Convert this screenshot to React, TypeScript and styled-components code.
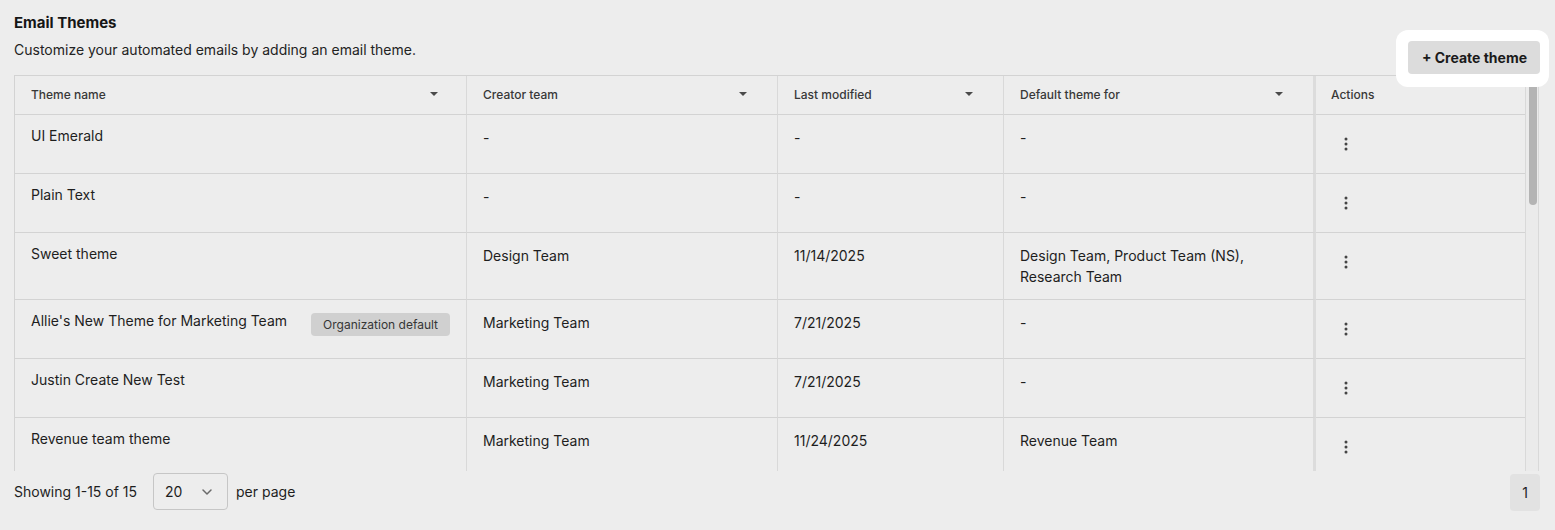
import React from "react";
import styled, { createGlobalStyle } from "styled-components";
import { ChevronDown } from "lucide-react";

const GlobalStyle = createGlobalStyle`
  html, body { margin: 0; padding: 0; background: #ededed; }
  body { font-family: Inter, "Noto Sans", "Liberation Sans", sans-serif; color: #1c1c1c; }
  * { box-sizing: border-box; }
`;

const Page = styled.div`
  position: relative;
  padding: 13px 16px 0 14px;
  height: 530px;
  overflow: hidden;
`;

const Title = styled.h1`
  margin: 0;
  font-size: 15px;
  line-height: 20px;
  font-weight: 700;
  color: #161616;
`;

const Subtitle = styled.p`
  margin: 7px 0 15px;
  font-size: 14px;
  line-height: 20px;
  color: #232323;
`;

const Spotlight = styled.div`
  position: absolute;
  top: 30px;
  right: 6px;
  padding: 11px 9px 13px 12px;
  background: #ffffff;
  border-radius: 12px;
  z-index: 2;
`;

const PrimaryButton = styled.button`
  display: block;
  height: 33px;
  padding: 0 13px 0 14px;
  border: none;
  border-radius: 4px;
  background: #dcdcdc;
  font-family: inherit;
  font-size: 14px;
  font-weight: 700;
  color: #1a1a1a;
  cursor: pointer;
`;

const TableFrame = styled.div`
  display: flex;
  height: 396px;
  border-top: 1px solid #d3d3d3;
`;

const Scroller = styled.div`
  flex: 1;
  min-width: 0;
  overflow-y: auto;
  border-left: 1px solid #d3d3d3;
  scrollbar-width: none;
  &::-webkit-scrollbar { display: none; }
`;

const ScrollTrack = styled.div`
  flex: none;
  width: 14px;
  padding: 2px 0 0 3px;
  background: #ebebeb;
  border-left: 1px solid #d9d9d9;
  border-right: 1px solid #d9d9d9;
`;

const ScrollThumb = styled.div`
  width: 8px;
  height: 127px;
  border-radius: 4px;
  background: #b4b4b4;
`;

const COLS = "452px 311px 226px 312px 1fr";

const HeaderRow = styled.div`
  display: grid;
  grid-template-columns: ${COLS};
  height: 39px;
`;

const HeaderCell = styled.div<{ $pinned?: boolean; $last?: boolean; $first?: boolean }>`
  display: flex;
  align-items: center;
  justify-content: space-between;
  padding: 0 ${(p) => (p.$first ? "28px" : "30px")} 2px
    ${(p) => (p.$last ? "15px" : "16px")};
  font-size: 12px;
  font-weight: 500;
  color: #383838;
  border-bottom: 1px solid #d3d3d3;
  border-right: ${(p) => (p.$last ? "none" : p.$pinned ? "3px solid #dcdcdc" : "1px solid #d9d9d9")};
`;

const Row = styled.div`
  display: grid;
  grid-template-columns: ${COLS};
`;

const Cell = styled.div<{ $pinned?: boolean; $first?: boolean }>`
  min-height: 59px;
  padding: ${(p) => (p.$first ? "10px 16px 12px 16px" : "12px 24px 12px 16px")};
  font-size: 14px;
  line-height: 21px;
  color: #1e1e1e;
  border-bottom: 1px solid #d3d3d3;
  border-right: ${(p) => (p.$pinned ? "3px solid #dcdcdc" : "1px solid #d9d9d9")};
`;

const NameCell = styled(Cell)`
  display: flex;
  align-items: flex-start;
  justify-content: space-between;
  gap: 12px;
`;

const Badge = styled.span`
  flex: none;
  margin-top: 3px;
  height: 23px;
  padding: 0 12px;
  display: inline-flex;
  align-items: center;
  border-radius: 4px;
  background: #d0d0d0;
  font-size: 12px;
  color: #363636;
`;

const ActionCell = styled.div`
  min-height: 59px;
  display: flex;
  align-items: flex-start;
  padding: 13px 0 0 14px;
  border-bottom: 1px solid #d3d3d3;
`;

const KebabButton = styled.button`
  width: 32px;
  height: 32px;
  display: flex;
  align-items: center;
  justify-content: center;
  border: none;
  background: transparent;
  padding: 0;
  color: #454545;
  cursor: pointer;
`;

const Footer = styled.div`
  display: flex;
  align-items: flex-start;
  justify-content: space-between;
  margin-top: 2px;
  margin-right: -1px;
`;

const FooterLeft = styled.div`
  display: flex;
  align-items: center;
  gap: 8px;
  font-size: 14px;
  color: #1e1e1e;
`;

const FooterText = styled.span`
  line-height: 20px;
`;

const PageSize = styled.div`
  display: flex;
  align-items: center;
  justify-content: space-between;
  width: 75px;
  height: 37px;
  margin-left: 8px;
  padding: 0 12px 0 11px;
  border: 1px solid #c6c6c6;
  border-radius: 4px;
  font-size: 14px;
  color: #1e1e1e;
`;

const PageButton = styled.button`
  width: 30px;
  height: 37px;
  margin-top: 1px;
  border: none;
  border-radius: 4px;
  background: #e2e2e2;
  font-family: inherit;
  font-size: 14px;
  color: #1e1e1e;
`;

const Caret = () => (
  <svg width="8" height="4" viewBox="0 0 8 4" aria-hidden="true">
    <path d="M0 0H8L4 4Z" fill="#4a4a4a" />
  </svg>
);

const Kebab = () => (
  <svg width="4" height="16" viewBox="0 0 4 16" aria-hidden="true">
    <circle cx="2" cy="3" r="1.5" fill="currentColor" />
    <circle cx="2" cy="8" r="1.5" fill="currentColor" />
    <circle cx="2" cy="13" r="1.5" fill="currentColor" />
  </svg>
);

type Theme = {
  name: string;
  badge?: string;
  team: string;
  modified: string;
  defaults: string;
};

const themes: Theme[] = [
  { name: "UI Emerald", team: "-", modified: "-", defaults: "-" },
  { name: "Plain Text", team: "-", modified: "-", defaults: "-" },
  { name: "Sweet theme", team: "Design Team", modified: "11/14/2025", defaults: "Design Team, Product Team (NS), Research Team" },
  { name: "Allie's New Theme for Marketing Team", badge: "Organization default", team: "Marketing Team", modified: "7/21/2025", defaults: "-" },
  { name: "Justin Create New Test", team: "Marketing Team", modified: "7/21/2025", defaults: "-" },
  { name: "Revenue team theme", team: "Marketing Team", modified: "11/24/2025", defaults: "Revenue Team" },
  { name: "Customer Success Theme", team: "Customer Success", modified: "10/02/2025", defaults: "Customer Success, Support Team (EMEA), Support Team (APAC), Onboarding Team" },
  { name: "Holiday Campaign", team: "Marketing Team", modified: "12/01/2025", defaults: "Marketing Team, Growth Team, Lifecycle Team, Partnerships Team" },
  { name: "Recruiting Outreach", team: "People Team", modified: "9/18/2025", defaults: "People Team, Recruiting Team (US), Recruiting Team (UK), Talent Team" },
  { name: "Minimal Dark", team: "Design Team", modified: "8/30/2025", defaults: "-" },
  { name: "Product Updates", team: "Product Team", modified: "11/05/2025", defaults: "Product Team, Product Team (NS), Engineering Team, Platform Team" },
  { name: "Sales Follow-up", team: "Sales Team", modified: "10/21/2025", defaults: "Sales Team (NA), Sales Team (EMEA), Sales Team (APAC)" },
  { name: "Event Invitations", team: "Events Team", modified: "6/12/2025", defaults: "Events Team, Field Marketing Team, Community Team" },
  { name: "Legacy Branding", team: "Brand Team", modified: "5/07/2025", defaults: "Brand Team, Legal Team (Compliance), Finance Team" },
  { name: "Weekly Digest", team: "Research Team", modified: "11/27/2025", defaults: "Research Team" },
];

export default function App() {
  return (
    <>
      <GlobalStyle />
      <Page>
        <Title>Email Themes</Title>
        <Subtitle>Customize your automated emails by adding an email theme.</Subtitle>
        <Spotlight>
          <PrimaryButton>+ Create theme</PrimaryButton>
        </Spotlight>

        <TableFrame>
          <Scroller>
            <HeaderRow>
              <HeaderCell $first>Theme name<Caret /></HeaderCell>
              <HeaderCell>Creator team<Caret /></HeaderCell>
              <HeaderCell>Last modified<Caret /></HeaderCell>
              <HeaderCell $pinned>Default theme for<Caret /></HeaderCell>
              <HeaderCell $last>Actions</HeaderCell>
            </HeaderRow>
            {themes.map((t) => (
              <Row key={t.name}>
                <NameCell $first>
                  <span>{t.name}</span>
                  {t.badge && <Badge>{t.badge}</Badge>}
                </NameCell>
                <Cell>{t.team}</Cell>
                <Cell>{t.modified}</Cell>
                <Cell $pinned>{t.defaults}</Cell>
                <ActionCell>
                  <KebabButton aria-label="Actions"><Kebab /></KebabButton>
                </ActionCell>
              </Row>
            ))}
          </Scroller>
          <ScrollTrack>
            <ScrollThumb />
          </ScrollTrack>
        </TableFrame>

        <Footer>
          <FooterLeft>
            <FooterText>Showing 1-15 of 15</FooterText>
            <PageSize>
              <span>20</span>
              <ChevronDown size={16} strokeWidth={2.25} color="#6a6a6a" />
            </PageSize>
            <FooterText>per page</FooterText>
          </FooterLeft>
          <PageButton>1</PageButton>
        </Footer>
      </Page>
    </>
  );
}
